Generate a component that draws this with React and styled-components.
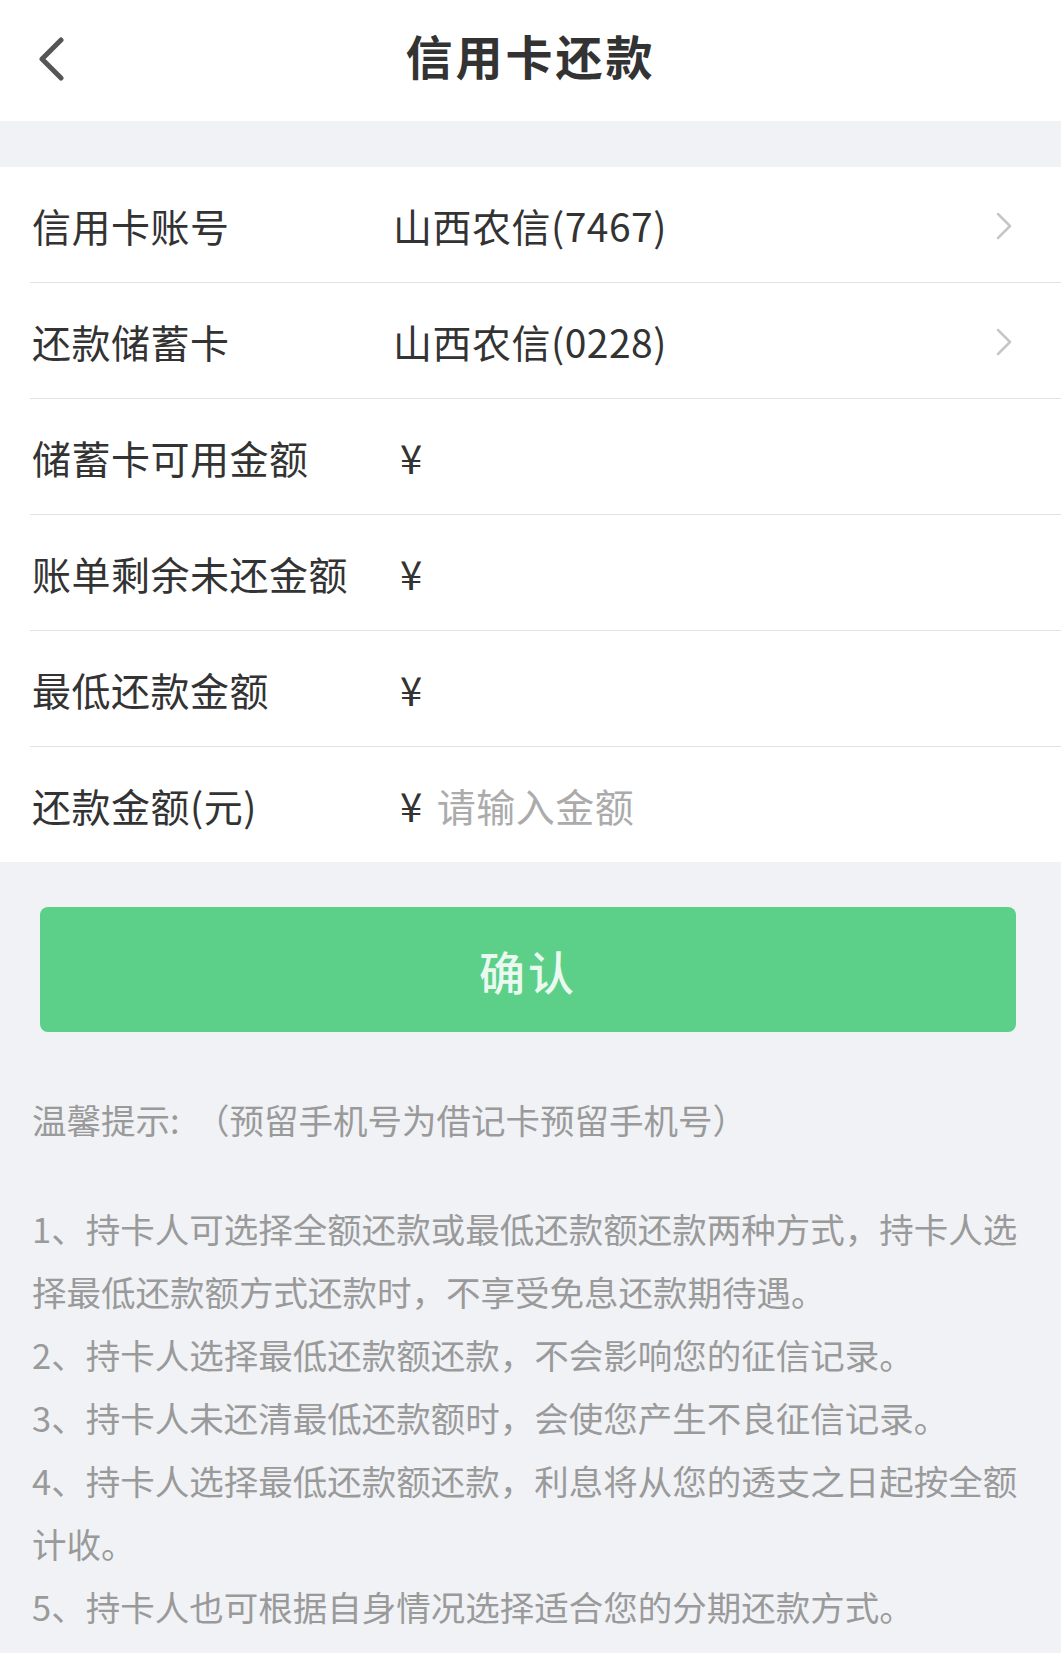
import styled, { createGlobalStyle } from "styled-components";

const GlobalStyle = createGlobalStyle`
  body {
    margin: 0;
    background-color: #f0f2f6;
    font-family: "Noto Sans CJK SC", "Noto Sans", sans-serif;
  }
`;

const rows = [
  { label: "信用卡账号", value: "山西农信(7467)", arrow: true },
  { label: "还款储蓄卡", value: "山西农信(0228)", arrow: true },
  { label: "储蓄卡可用金额", yen: true },
  { label: "账单剩余未还金额", yen: true },
  { label: "最低还款金额", yen: true },
  { label: "还款金额(元)", yen: true, placeholder: "请输入金额" },
];

const tips = [
  "1、持卡人可选择全额还款或最低还款额还款两种方式，持卡人选择最低还款额方式还款时，不享受免息还款期待遇。",
  "2、持卡人选择最低还款额还款，不会影响您的征信记录。",
  "3、持卡人未还清最低还款额时，会使您产生不良征信记录。",
  "4、持卡人选择最低还款额还款，利息将从您的透支之日起按全额计收。",
  "5、持卡人也可根据自身情况选择适合您的分期还款方式。",
];

export default function App() {
  return (
    <STPage>
      <GlobalStyle />
      <STHeader>
        <STBack aria-label="返回">
          <svg width="28" height="44" viewBox="0 0 28 44">
            <path
              d="M24 3 L5 22 L24 41"
              fill="none"
              stroke="#555"
              strokeWidth="5"
              strokeLinecap="round"
              strokeLinejoin="round"
            />
          </svg>
        </STBack>
        <STTitle>信用卡还款</STTitle>
        <span />
      </STHeader>

      <STBand />

      <STList>
        {rows.map((row, i) => (
          <STRow key={row.label} last={i === rows.length - 1}>
            <STLabel>{row.label}</STLabel>
            <STValue>
              {row.value}
              {row.yen && <STYen>¥</STYen>}
              {row.placeholder && (
                <STPlaceholder>{row.placeholder}</STPlaceholder>
              )}
            </STValue>
            {row.arrow && (
              <STArrow width="18" height="30" viewBox="0 0 18 30">
                <path
                  d="M3 3 L15 15 L3 27"
                  fill="none"
                  stroke="#c6c6c6"
                  strokeWidth="2.5"
                  strokeLinecap="round"
                  strokeLinejoin="round"
                />
              </STArrow>
            )}
          </STRow>
        ))}
      </STList>

      <STButtonWrap>
        <STButton>确认</STButton>
      </STButtonWrap>

      <STTips>
        <STTipTitle>温馨提示:{"\u00a0\u00a0"}（预留手机号为借记卡预留手机号）</STTipTitle>
        {tips.map((t) => (
          <STTipLine key={t}>{t}</STTipLine>
        ))}
      </STTips>
    </STPage>
  );
}

const STPage = styled.div`
  width: 1061px;
  min-height: 1653px;
  background-color: #f0f2f6;
`;

const STHeader = styled.header`
  height: 121px;
  box-sizing: border-box;
  padding-bottom: 12px;
  background-color: #ffffff;
  display: grid;
  grid-template-columns: 110px 1fr 110px;
  align-items: center;
`;

const STBack = styled.button`
  border: none;
  background: none;
  padding: 0 0 0 37px;
  margin-top: 8px;
  display: flex;
  align-items: center;
  cursor: pointer;
`;

const STTitle = styled.h1`
  margin: 0;
  text-align: center;
  font-size: 47px;
  font-weight: 700;
  letter-spacing: 3px;
  color: #333333;
`;

const STBand = styled.div`
  height: 46px;
`;

const STList = styled.div`
  background-color: #ffffff;
`;

const STRow = styled.div`
  height: ${(p) => (p.last ? "115px" : "116px")};
  box-sizing: border-box;
  margin-left: 30px;
  padding: 0 48px 0 2px;
  border-bottom: ${(p) => (p.last ? "none" : "1.5px solid #e2e2e2")};
  display: flex;
  align-items: center;
`;

const STLabel = styled.span`
  width: 361px;
  flex-shrink: 0;
  font-size: 39px;
  letter-spacing: 0.5px;
  color: #333333;
`;

const STValue = styled.span`
  flex: 1;
  font-size: 39px;
  letter-spacing: 0.5px;
  color: #333333;
  display: flex;
  align-items: center;
`;

const STYen = styled.span`
  margin-left: 7px;
  font-size: 40px;
`;

const STPlaceholder = styled.span`
  margin-left: 14px;
  color: #ababab;
`;

const STArrow = styled.svg`
  flex-shrink: 0;
  margin-top: 2px;
`;

const STButtonWrap = styled.div`
  padding: 45px 45px 0 40px;
`;

const STButton = styled.button`
  width: 100%;
  height: 125px;
  border: none;
  border-radius: 8px;
  background-color: #5ccf88;
  color: rgba(255, 255, 255, 0.88);
  font-family: "Noto Sans CJK SC", sans-serif;
  font-size: 46px;
  font-weight: 500;
  letter-spacing: 3px;
  cursor: pointer;
`;

const STTips = styled.div`
  padding: 56px 28px 0 32px;
  color: #9a9a9a;
  font-size: 34.5px;
`;

const STTipTitle = styled.p`
  margin: 0 0 46px;
  line-height: 63px;
`;

const STTipLine = styled.p`
  margin: 0;
  line-height: 63px;
`;
